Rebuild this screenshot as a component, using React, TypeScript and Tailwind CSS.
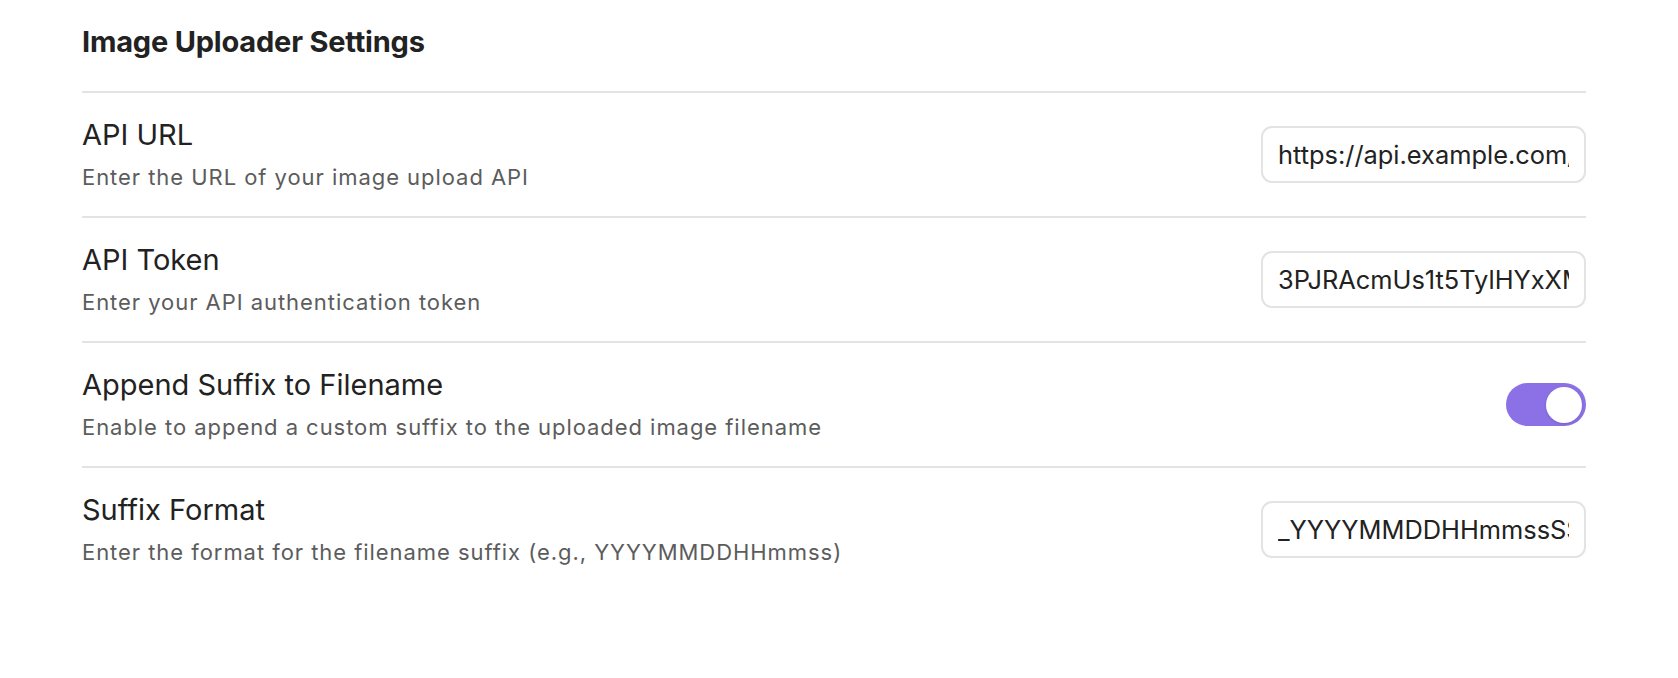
import { useState } from "react";

const rows = [
  {
    name: "API URL",
    desc: "Enter the URL of your image upload API",
    kind: "text",
    value: "https://api.example.com/upload",
  },
  {
    name: "API Token",
    desc: "Enter your API authentication token",
    kind: "text",
    value: "3PJRAcmUs1t5TylHYxXMqL9bN2",
  },
  {
    name: "Append Suffix to Filename",
    desc: "Enable to append a custom suffix to the uploaded image filename",
    kind: "toggle",
    value: "",
  },
  {
    name: "Suffix Format",
    desc: "Enter the format for the filename suffix (e.g., YYYYMMDDHHmmss)",
    kind: "text",
    value: "_YYYYMMDDHHmmssSSS",
  },
];

function Toggle() {
  const [on, setOn] = useState(true);
  return (
    <button
      onClick={() => setOn(!on)}
      className={
        "relative h-[43px] w-[80px] rounded-full transition-colors " +
        (on ? "bg-[#8c70e6]" : "bg-[#d0d0d0]")
      }
    >
      <span
        className={
          "absolute top-[3.5px] h-[36px] w-[36px] rounded-full bg-white shadow-sm transition-all " +
          (on ? "left-[40px]" : "left-[4px]")
        }
      />
    </button>
  );
}

export default function App() {
  return (
    <div
      className="min-h-screen bg-white text-[#222222]"
      style={{ fontFamily: "Inter, 'Noto Sans', sans-serif" }}
    >
      <div className="ml-[82px] w-[1504px] pt-[26px]">
        <h2 className="mb-[33px] h-[32px] text-[29px] font-bold leading-[32px] tracking-[-0.2px]">
          Image Uploader Settings
        </h2>
        {rows.map((row) => (
          <div
            key={row.name}
            className="flex items-center justify-between border-t-2 border-[#e3e3e3] py-[25px]"
          >
            <div>
              <div className="text-[29px] leading-[34px]">{row.name}</div>
              <div className="mt-[11px] text-[22px] leading-[28px] tracking-[0.95px] text-[#5c5c5c]">
                {row.desc}
              </div>
            </div>
            {row.kind === "toggle" ? (
              <Toggle />
            ) : (
              <input
                defaultValue={row.value}
                className="h-[57px] w-[325px] rounded-[11px] border-2 border-[#e3e3e3] bg-white px-[15px] text-[25.4px] text-[#222222] outline-none"
              />
            )}
          </div>
        ))}
      </div>
    </div>
  );
}
